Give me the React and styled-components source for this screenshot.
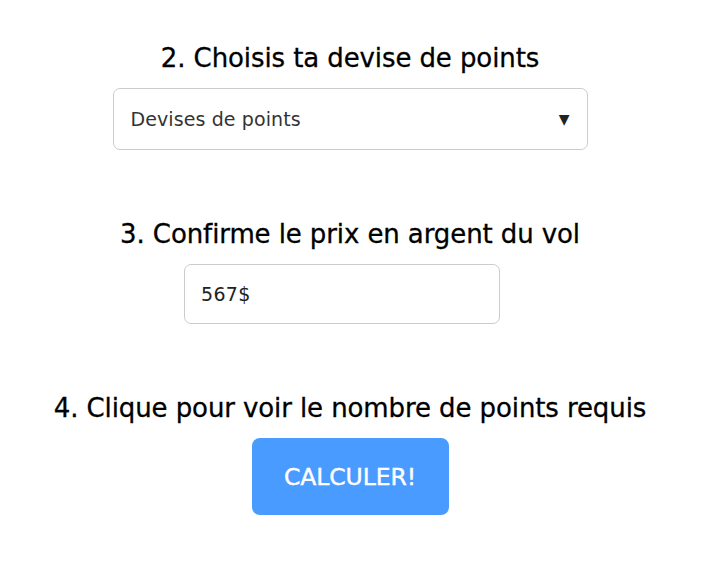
import React, { useState } from 'react'
import styled, { createGlobalStyle } from 'styled-components'

const GlobalStyle = createGlobalStyle`
  html, body {
    margin: 0;
    padding: 0;
    background: #fff;
  }
  body {
    font-family: "DejaVu Sans", "Noto Sans", sans-serif;
    color: #000;
  }
`

const Container = styled.div`
  width: 700px;
  display: flex;
  flex-direction: column;
  align-items: center;
  padding-top: 41px;
`

const Step = styled.section`
  display: flex;
  flex-direction: column;
  align-items: center;
  margin-bottom: ${props => props.gap || '0px'};
`

const Title = styled.h2`
  margin: 0 0 13px;
  font-size: 26px;
  font-weight: 400;
  line-height: 34px;
  letter-spacing: -0.1px;
  -webkit-text-stroke: 0.3px #000;
  color: #000;
`

const SelectBox = styled.div`
  width: 475px;
  height: 62px;
  box-sizing: border-box;
  border: 1px solid #ccc;
  border-radius: 7px;
  display: flex;
  align-items: center;
  justify-content: space-between;
  padding: 0 17px 0 17px;
  font-size: 19px;
  letter-spacing: 0.1px;
  color: #333;
  cursor: pointer;
`

const Arrow = styled.span`
  font-size: 14px;
  color: #222;
`

const Input = styled.input`
  width: 316px;
  height: 60px;
  box-sizing: border-box;
  border: 1px solid #ccc;
  border-radius: 7px;
  padding: 0 16px;
  margin-right: ${props => props.shift || '0px'};
  font-family: inherit;
  font-size: 19px;
  letter-spacing: 0.3px;
  color: #222;
  outline: none;
`

const Button = styled.button`
  width: 197px;
  height: 77px;
  border: none;
  border-radius: 8px;
  background: #4a9bff;
  color: #fff;
  font-family: inherit;
  font-size: 23.5px;
  font-weight: 400;
  letter-spacing: -0.1px;
  -webkit-text-stroke: 0.4px #fff;
  cursor: pointer;
`

const App = () => {
  const [price, setPrice] = useState('567$')

  return (
    <>
      <GlobalStyle />
      <Container>
        <Step gap="67px">
          <Title>2. Choisis ta devise de points</Title>
          <SelectBox>
            <span>Devises de points</span>
            <Arrow>▼</Arrow>
          </SelectBox>
        </Step>
        <Step gap="67px">
          <Title>3. Confirme le prix en argent du vol</Title>
          <Input shift="16px" value={price} onChange={e => setPrice(e.target.value)} />
        </Step>
        <Step>
          <Title>4. Clique pour voir le nombre de points requis</Title>
          <Button>CALCULER!</Button>
        </Step>
      </Container>
    </>
  )
}

export default App
